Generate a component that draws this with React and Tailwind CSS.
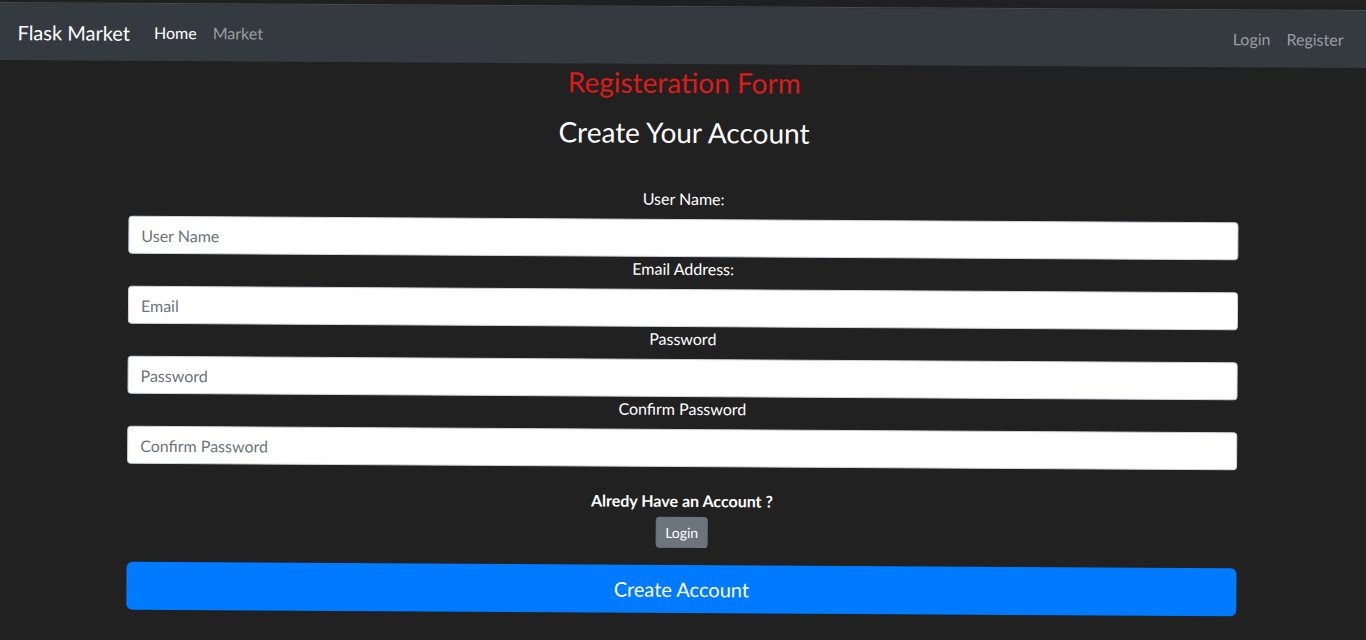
import React from "react";

const fields = [
  { label: "User Name:", placeholder: "User Name", type: "text" },
  { label: "Email Address:", placeholder: "Email", type: "email" },
  { label: "Password", placeholder: "Password", type: "password" },
  { label: "Confirm Password", placeholder: "Confirm Password", type: "password" },
];

const App = () => {
  return (
    <div
      className="w-[1366px] h-[640px] overflow-hidden bg-[#212121] text-white"
      style={{ fontFamily: "Lato, 'Noto Sans', sans-serif" }}
    >
      <div className="rotate-[0.33deg] origin-center">
        {/* window strip */}
        <div className="h-[7px] -mx-4 bg-[#202020] border-b border-[#4a4a4a]" />

        {/* navbar */}
        <nav className="h-[57px] -mx-4 px-8 bg-[#343a40] flex items-center justify-between">
          <div className="flex items-center">
            <span className="text-[20px] mr-4 text-white">Flask Market</span>
            <a className="px-2 text-[16px] text-white">Home</a>
            <a className="px-2 text-[16px] text-[#9a9da0]">Market</a>
          </div>
          <div className="flex items-center">
            <a className="px-2 text-[16px] text-[#9a9da0]">Login</a>
            <a className="px-2 text-[16px] text-[#9a9da0]">Register</a>
          </div>
        </nav>

        <div className="w-[1110px] mx-auto text-center">
          <h3 className="text-[28px] leading-[34px] text-[#de1a1a] mt-[1px]">
            Registeration Form
          </h3>
          <h3 className="text-[28px] leading-[34px] text-white mt-4">
            Create Your Account
          </h3>

          <form className="mt-[38px] flex flex-col">
            {fields.map((f) => (
              <div key={f.label} className="flex flex-col">
                <label className="text-[16px] leading-6 mb-2 text-white">
                  {f.label}
                </label>
                <input
                  type={f.type}
                  placeholder={f.placeholder}
                  className="h-[38px] w-full px-3 rounded bg-white border border-[#ced4da] text-[16px] text-[#495057] placeholder:text-[#6c757d] outline-none"
                />
              </div>
            ))}

            <p className="mt-[22px] text-[16px] leading-6 font-bold text-white">
              Alredy Have an Account ?
            </p>
            <div className="mt-1 flex justify-center">
              <button
                type="button"
                className="px-2 py-1 text-[14px] leading-[21px] rounded bg-[#6c757d] text-white border border-[#6c757d]"
              >
                Login
              </button>
            </div>

            <button
              type="button"
              className="mt-[17px] h-[48px] w-full rounded-md bg-[#007bff] text-white text-[20px]"
            >
              Create Account
            </button>
          </form>
        </div>
      </div>
    </div>
  );
};

export default App;
